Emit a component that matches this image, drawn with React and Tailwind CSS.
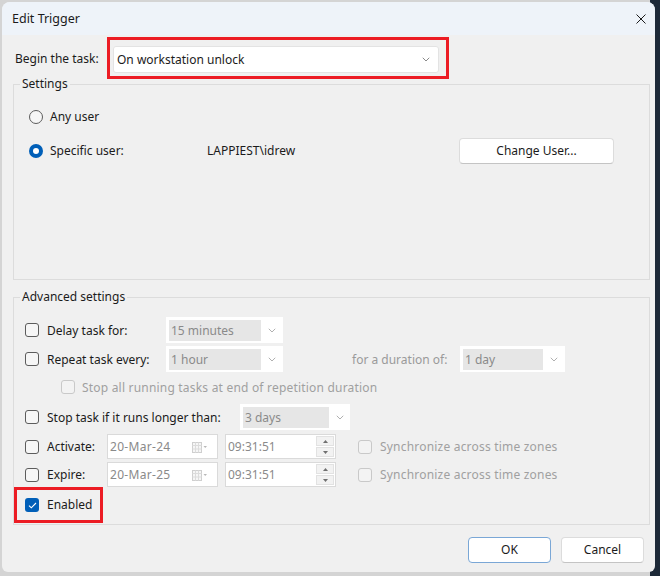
import React from "react";

function Chevron({ color = "#9a9a9a" }) {
  return (
    <svg width="8" height="5" viewBox="0 0 8 5" fill="none">
      <path d="M0.75 0.75 L4 4 L7.25 0.75" stroke={color} strokeWidth="1" />
    </svg>
  );
}

function Checkbox({ checked, disabled }) {
  if (checked) {
    return (
      <div className="w-[14px] h-[14px] shrink-0 rounded-[3px] bg-[#005fb8] flex items-center justify-center">
        <svg width="9" height="7" viewBox="0 0 9 7" fill="none">
          <path d="M1 3.6 L3.3 5.8 L8 1" stroke="#ffffff" strokeWidth="1.1" />
        </svg>
      </div>
    );
  }
  return (
    <div
      className={
        disabled
          ? "w-[14px] h-[14px] shrink-0 rounded-[3px] border border-[#c9c9c9] bg-[#f3f3f3]"
          : "w-[14px] h-[14px] shrink-0 rounded-[3px] border border-[#5c5c5c] bg-[#f6f6f6]"
      }
    />
  );
}

function Radio({ checked }) {
  if (checked) {
    return (
      <div className="w-[14px] h-[14px] shrink-0 rounded-full bg-[#005fb8] flex items-center justify-center">
        <div className="w-[6px] h-[6px] rounded-full bg-white" />
      </div>
    );
  }
  return <div className="w-[14px] h-[14px] shrink-0 rounded-full border border-[#5c5c5c] bg-[#f6f6f6]" />;
}

function Combo({ text, w, innerW }) {
  return (
    <div className="h-[26px] bg-white flex items-center pl-[3px] shrink-0" style={{ width: w }}>
      <div className="h-[21px] bg-[#e6e6e6] flex items-center pl-[2px] pt-[1px] text-[#8a8a8a]" style={{ width: innerW }}>
        {text}
      </div>
      <div className="flex-1 flex items-center justify-center">
        <Chevron color="#b0b0b0" />
      </div>
    </div>
  );
}

function CalendarIcon() {
  return (
    <svg width="16" height="11" viewBox="0 0 16 11" fill="none">
      <rect x="0.5" y="0.5" width="9" height="10" stroke="#cfcfcf" fill="#f6f6f6" />
      <path d="M3.5 0.5 V10.5 M6.5 0.5 V10.5 M0.5 3.5 H9.5 M0.5 7 H9.5" stroke="#dcdcdc" />
      <path d="M11.5 4 L15 4 L13.25 6 Z" fill="#b8b8b8" />
    </svg>
  );
}

function DateField({ text }) {
  return (
    <div className="w-[111px] h-[25px] shrink-0 bg-white border border-[#dadada] flex items-center pl-[2px] pt-[1px] text-[#8a8a8a]">
      <span className="w-[82px] tracking-[0.3px]">{text}</span>
      <CalendarIcon />
    </div>
  );
}

function TimeField({ text }) {
  return (
    <div className="w-[111px] h-[25px] shrink-0 bg-white border border-[#dadada] flex items-center pl-[2px] pr-[1px] text-[#8a8a8a]">
      <span className="flex-1 pt-[1px]">{text}</span>
      <div className="w-[18px] h-[21px] flex flex-col gap-[1px]">
        <div className="flex-1 bg-[#f2f2f2] border border-[#e2e2e2] flex items-center justify-center">
          <svg width="5" height="3" viewBox="0 0 5 3">
            <path d="M0 3 L2.5 0 L5 3 Z" fill="#707070" />
          </svg>
        </div>
        <div className="flex-1 bg-[#f2f2f2] border border-[#e2e2e2] flex items-center justify-center">
          <svg width="5" height="3" viewBox="0 0 5 3">
            <path d="M0 0 L2.5 3 L5 0 Z" fill="#707070" />
          </svg>
        </div>
      </div>
    </div>
  );
}

export default function App() {
  return (
    <div className="w-[660px] h-[576px] pt-[2px] pl-[2px] bg-[linear-gradient(to_right,#d4d4d4_0,#d4d4d4_650px,#1d2938_650px)] font-['Noto_Sans',sans-serif] text-[12px] text-[#1b1b1b] overflow-hidden">
      <div className="w-[653px] h-[570px] bg-[#f0f0f0] rounded-t-[8px] rounded-b-[6px] overflow-hidden flex flex-col">
        {/* Title bar */}
        <div className="h-[33px] shrink-0 bg-[#eef3f9] flex items-center justify-between pl-[10px] pr-[9px]">
          <span className="text-[12.5px] leading-[16px]">Edit Trigger</span>
          <svg width="10" height="10" viewBox="0 0 10 10" fill="none">
            <path d="M0.5 0.5 L9.5 9.5 M9.5 0.5 L0.5 9.5" stroke="#1b1b1b" strokeWidth="1" />
          </svg>
        </div>

        {/* Begin the task */}
        <div className="mt-[2px] flex items-center pl-[13px]">
          <span className="w-[92px] shrink-0 pt-[2px]">Begin the task:</span>
          <div className="w-[342px] h-[42px] border-[3px] border-[#ec1c24] pl-[3px] pr-[7px] pt-[6px] pb-[3px]">
            <div className="h-[27px] bg-white border border-[#e3e3e3] rounded-[3px] flex items-center pl-[3px] pr-[8px] justify-between">
              <span className="pt-[1px]">On workstation unlock</span>
              <Chevron color="#8a8a8a" />
            </div>
          </div>
        </div>

        {/* Settings */}
        <fieldset className="ml-[11px] mt-[-3px] w-[637px] border border-[#dcdcdc]">
          <legend className="ml-[6px] px-[2px] leading-[16px]">Settings</legend>
          <div className="pl-[15px] pt-[15px] pb-[115px]">
            <div className="h-[20px] flex items-center gap-[7px]">
              <Radio />
              <span>Any user</span>
            </div>
            <div className="mt-[11px] h-[26px] flex items-center">
              <Radio checked />
              <span className="ml-[7px] w-[157px]">Specific user:</span>
              <span className="w-[252px]">LAPPIEST\idrew</span>
              <div className="w-[155px] h-[26px] bg-white border border-[#dcdcdc] border-b-[#c4c4c4] rounded-[4px] flex items-center justify-center">
                Change User...
              </div>
            </div>
          </div>
        </fieldset>

        {/* Advanced settings */}
        <fieldset className="ml-[11px] mt-[9px] w-[637px] border border-[#dcdcdc]">
          <legend className="ml-[6px] px-[2px] leading-[16px]">Advanced settings</legend>
          <div className="pl-[11px] pt-[12px] pb-[1px]">
            <div className="h-[26px] flex items-center">
              <Checkbox />
              <span className="ml-[8px] w-[119px] pt-[1px]">Delay task for:</span>
              <Combo text="15 minutes" w={117} innerW={92} />
            </div>

            <div className="mt-[3px] h-[26px] flex items-center">
              <Checkbox />
              <span className="ml-[8px] w-[119px] pt-[1px]">Repeat task every:</span>
              <Combo text="1 hour" w={117} innerW={92} />
              <span className="ml-[69px] w-[108px] pt-[1px] text-[#9a9a9a]">for a duration of:</span>
              <Combo text="1 day" w={105} innerW={80} />
            </div>

            <div className="mt-[7px] h-[16px] flex items-center pl-[36px]">
              <Checkbox disabled />
              <span className="ml-[7px] pt-[1px] text-[#a0a0a0] tracking-[0.2px]">Stop all running tasks at end of repetition duration</span>
            </div>

            <div className="mt-[9px] h-[26px] flex items-center">
              <Checkbox />
              <span className="ml-[8px] w-[193px] pt-[1px]">Stop task if it runs longer than:</span>
              <Combo text="3 days" w={110} innerW={86} />
            </div>

            <div className="mt-[4px] h-[25px] flex items-center">
              <Checkbox />
              <span className="ml-[8px] w-[60px] pt-[1px]">Activate:</span>
              <DateField text="20-Mar-24" />
              <div className="ml-[7px]">
                <TimeField text="09:31:51" />
              </div>
              <div className="ml-[22px]">
                <Checkbox disabled />
              </div>
              <span className="ml-[8px] pt-[1px] text-[#a0a0a0] tracking-[0.2px]">Synchronize across time zones</span>
            </div>

            <div className="mt-[3px] h-[25px] flex items-center">
              <Checkbox />
              <span className="ml-[8px] w-[60px] pt-[1px]">Expire:</span>
              <DateField text="20-Mar-25" />
              <div className="ml-[7px]">
                <TimeField text="09:31:51" />
              </div>
              <div className="ml-[22px]">
                <Checkbox disabled />
              </div>
              <span className="ml-[8px] pt-[1px] text-[#a0a0a0] tracking-[0.2px]">Synchronize across time zones</span>
            </div>

            <div className="ml-[-11px] w-[89px] h-[36px] border-[3px] border-[#ec1c24] flex items-center pl-[8px]">
              <Checkbox checked />
              <span className="ml-[8px]">Enabled</span>
            </div>
          </div>
        </fieldset>

        {/* Buttons */}
        <div className="mt-[12px] flex justify-end gap-[10px] pr-[11px]">
          <div className="w-[83px] h-[26px] bg-white border border-[#7aa7d6] rounded-[4px] flex items-center justify-center">
            OK
          </div>
          <div className="w-[83px] h-[26px] bg-white border border-[#dcdcdc] border-b-[#c4c4c4] rounded-[4px] flex items-center justify-center">
            Cancel
          </div>
        </div>
      </div>
    </div>
  );
}
